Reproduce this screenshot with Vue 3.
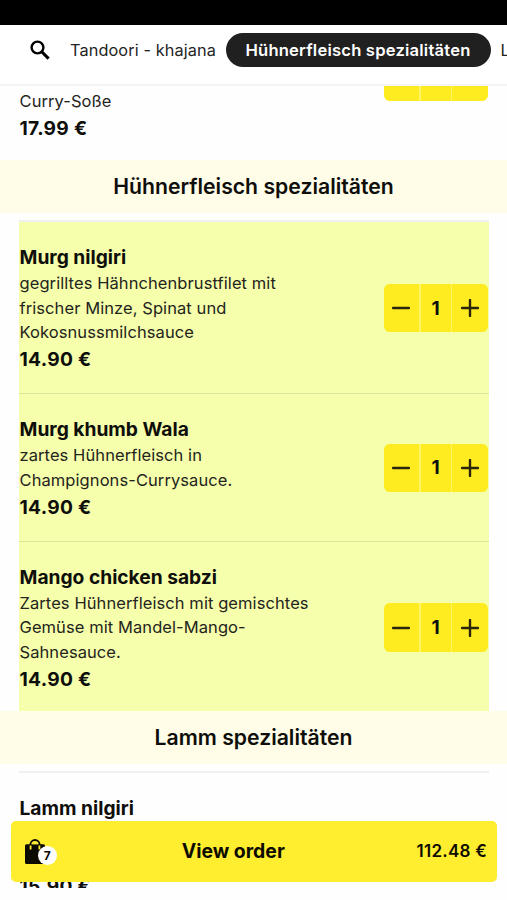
<script setup>
const sections = [
  {
    title: 'Hühnerfleisch spezialitäten',
    dishes: [
      {
        name: 'Murg nilgiri',
        lines: ['gegrilltes Hähnchenbrustfilet mit', 'frischer Minze, Spinat und', 'Kokosnussmilchsauce'],
        price: '14.90 €',
        qty: 1,
      },
      {
        name: 'Murg khumb Wala',
        lines: ['zartes Hühnerfleisch in', 'Champignons-Currysauce.'],
        price: '14.90 €',
        qty: 1,
      },
      {
        name: 'Mango chicken sabzi',
        lines: ['Zartes Hühnerfleisch mit gemischtes', 'Gemüse mit Mandel-Mango-', 'Sahnesauce.'],
        price: '14.90 €',
        qty: 1,
      },
    ],
  },
  {
    title: 'Lamm spezialitäten',
    dishes: [{ name: 'Lamm nilgiri', lines: ['', ''], price: '15.90 €', qty: 0 }],
  },
]
</script>

<template>
  <div class="screen">
    <div class="status"></div>
    <nav class="tabs">
      <svg class="search" viewBox="0 0 20 20">
        <circle cx="7.5" cy="7.5" r="5.9" fill="none" stroke="#000" stroke-width="2.4" />
        <path d="M12 12L18.6 18.6" stroke="#000" stroke-width="3.1" />
      </svg>
      <span class="tab">Tandoori - khajana</span>
      <span class="tab active"><span>Hühnerfleisch spezialitäten</span></span>
      <span class="tab next">Lamm</span>
    </nav>

    <main>
      <div class="previous">
        <div>
          <p class="desc"><span>Curry-Soße</span></p>
          <p class="price">17.99 €</p>
        </div>
        <div class="stepper stub"><i></i><i></i><i></i></div>
      </div>

      <section v-for="section in sections" :key="section.title">
        <h2>{{ section.title }}</h2>
        <ul>
          <li v-for="dish in section.dishes" :key="dish.name" :class="{ chosen: dish.qty }">
            <div class="info">
              <h3>{{ dish.name }}</h3>
              <p class="desc"><span v-for="(line, i) in dish.lines" :key="i">{{ line }}</span></p>
              <p class="price">{{ dish.price }}</p>
            </div>
            <div v-if="dish.qty" class="stepper">
              <i><svg viewBox="0 0 18 18"><path d="M1 9H17" /></svg></i>
              <i>{{ dish.qty }}</i>
              <i><svg viewBox="0 0 18 18"><path d="M1 9H17M9 1V17" /></svg></i>
            </div>
          </li>
        </ul>
      </section>
    </main>

    <div class="safe-area"></div>
    <button class="order">
      <span class="bag">
        <svg viewBox="0 0 20 25">
          <path d="M5.4 8V5.4a4.6 4.4 0 0 1 9.2 0V8" fill="none" stroke="#0d0b00" stroke-width="1.8" />
          <path d="M1.5 5.2H18.5a1.5 1.5 0 0 1 1.5 1.5V23.5a1.5 1.5 0 0 1-1.5 1.5H1.5a1.5 1.5 0 0 1-1.5-1.5V6.7a1.5 1.5 0 0 1 1.5-1.5Z" fill="#0d0b00" />
          <path d="M5.6 6.5V10.5M14.4 6.5V10.5" stroke="#ffed30" stroke-width="1.8" />
          <path d="M7.3 5.2V5a2.7 2.6 0 0 1 5.4 0V5.2Z" fill="#ffed30" />
        </svg>
        <b>7</b>
      </span>
      <span class="label">View order</span>
      <span class="total">112.48 €</span>
    </button>
  </div>
</template>

<style>
body {
  margin: 0;
  background: #fff;
}
</style>

<style scoped>
* {
  box-sizing: border-box;
}
.screen {
  position: relative;
  width: 507px;
  height: 900px;
  overflow: hidden;
  background: #fefefe;
  color: #0e0e0a;
  font-family: Inter, 'Liberation Sans', sans-serif;
}
.status {
  height: 25px;
  background: #000;
}
.tabs {
  display: flex;
  align-items: center;
  height: 61px;
  padding: 0 0 9px 30px;
  border-bottom: 2px solid #f4f4f4;
  background: #fff;
  white-space: nowrap;
  overflow: hidden;
}
.search {
  flex: none;
  width: 20px;
  height: 20px;
  margin-right: 20px;
}
.tab {
  flex: none;
  font-size: 16.3px;
  letter-spacing: 0.1px;
  color: #242424;
  width: 155.5px;
}
.active {
  display: flex;
  align-items: center;
  justify-content: center;
  width: 265px;
  height: 34px;
  border-radius: 17px;
  background: #202020;
  color: #fff;
  font-size: 16.6px;
  font-weight: 600;
  letter-spacing: 0.2px;
}
.next {
  margin-left: 10px;
}
h2,
h3,
p,
ul {
  margin: 0;
  padding: 0;
}
.previous {
  display: flex;
  justify-content: space-between;
  height: 74px;
  padding: 3px 19px 0 19.5px;
}
.previous .price {
  margin-top: 1px;
}
.stepper.stub {
  height: 15px;
  margin: -3px 0 0;
  border-radius: 0 0 6px 6px;
}
h2 {
  height: 53px;
  background: #fffce8;
  font-size: 21.2px;
  line-height: 53px;
  font-weight: 600;
  text-align: center;
}
ul {
  margin: 7px 18.5px -2px 19px;
  border-top: 2px solid #f0f0f0;
  list-style: none;
}
li {
  display: flex;
  align-items: center;
  justify-content: space-between;
  padding: 22px 0 19.8px;
  border-bottom: 1px solid #dce59a;
}
li:last-child {
  border-bottom: 0;
}
.chosen {
  background: #f6ffab;
}
.info {
  padding-left: 0.5px;
}
h3 {
  font-size: 19.2px;
  line-height: 27px;
  font-weight: 700;
}
.desc {
  font-size: 16.5px;
  line-height: 24.5px;
  letter-spacing: 0.08px;
  color: #24241c;
}
.desc span {
  display: block;
  height: 24.5px;
  white-space: nowrap;
}
.price {
  margin-top: 1.8px;
  font-size: 19.2px;
  line-height: 27px;
  font-weight: 700;
  letter-spacing: 0.3px;
}
.stepper {
  display: grid;
  grid-template-columns: 35.5px 30px 36px;
  gap: 1.5px;
  flex: none;
  width: 104.5px;
  height: 48.5px;
  margin: 0 0.5px 1.2px 0;
  border-radius: 6px;
  overflow: hidden;
  background: #fff567;
}
.stepper i {
  display: flex;
  align-items: center;
  justify-content: center;
  background: #ffec20;
  font-style: normal;
  font-size: 19px;
  font-weight: 700;
}
.stepper svg {
  width: 18px;
  height: 18px;
}
.stepper path {
  stroke: #28250c;
  stroke-width: 2.4;
  stroke-linecap: round;
}
.safe-area {
  position: absolute;
  inset: 888px 0 0;
  background: #fefefe;
}
.order {
  position: absolute;
  left: 10.5px;
  top: 820.5px;
  display: grid;
  grid-template-columns: 77px 1fr 122px;
  align-items: center;
  width: 486.5px;
  height: 61px;
  padding: 0 10px 0 14px;
  border: 0;
  border-radius: 5px;
  background: #ffed30;
  color: #0d0b00;
  font-family: inherit;
  font-weight: 600;
}
.bag {
  position: relative;
  height: 25px;
}
.bag svg {
  display: block;
  width: 20px;
  height: 25px;
}
.bag b {
  position: absolute;
  left: 13px;
  top: 7px;
  width: 19.5px;
  height: 19.5px;
  border-radius: 50%;
  background: #fff;
  font-size: 12px;
  line-height: 19.5px;
  font-weight: 700;
  text-align: center;
}
.label {
  font-size: 19.4px;
  font-weight: 650;
  text-align: center;
}
.total {
  font-size: 17px;
  letter-spacing: 0.25px;
  text-align: right;
}
</style>
